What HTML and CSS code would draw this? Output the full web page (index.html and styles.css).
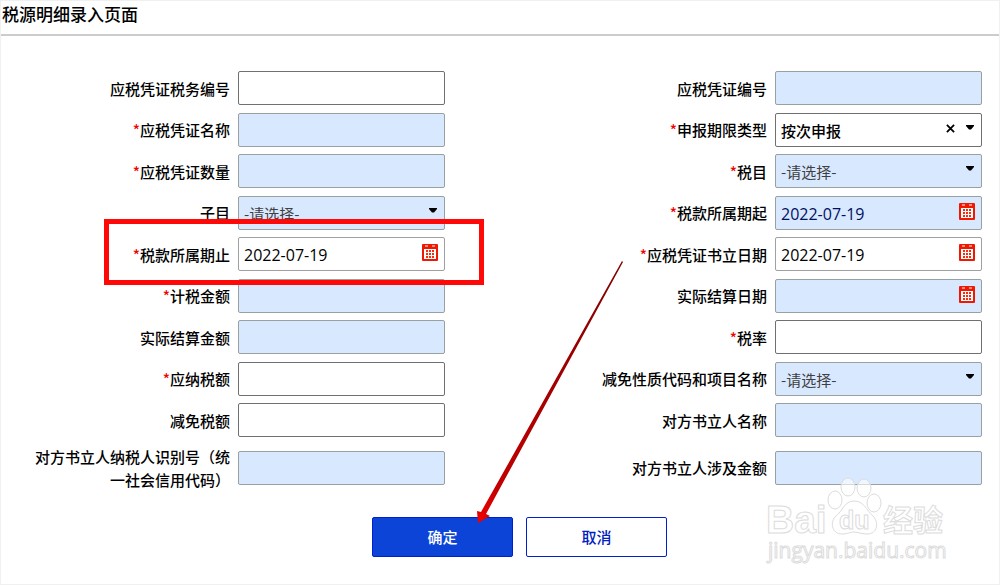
FILE: index.html
```html
<!DOCTYPE html>
<html lang="zh-CN">
<head>
  <meta charset="UTF-8">
  <meta name="viewport" content="width=device-width, initial-scale=1.0">
  <title>税源明细录入页面</title>
  <link rel="stylesheet" href="styles.css">
</head>
<body>
  <!-- Shared icons -->
  <svg class="sprite" aria-hidden="true">
    <symbol id="icon-calendar" viewBox="0 0 18 18">
      <path d="M2 0h14q1 0 1 1v15q0 1-1 1H2q-1 0-1-1V1q0-1 1-1z" fill="#f01800"/>
      <path d="M3 5h12v10H3z" fill="#fff"/>
      <path d="M4 2h3M11 2h3" stroke="#fff" stroke-width="1"/>
      <path d="M5 6h2v2H5zM8 6h2v2H8zM11 6h2v2h-2zM5 9h2v2H5zM8 9h2v2H8zM11 9h2v2h-2zM5 12h2v2H5zM8 12h2v2H8zM11 12h2v2h-2z" fill="#f03010"/>
    </symbol>
    <symbol id="icon-arrow" viewBox="0 0 8 5">
      <path d="M0 0h8v1L5 4.500H3L0 1z" fill="#000"/>
    </symbol>
  </svg>

  <div class="page">
    <header>
      <h1>税源明细录入页面</h1>
    </header>

    <form>
      <div class="columns">
        <!-- Left column -->
        <div class="column column-left">
          <div class="field">
            <label for="tax-no">应税凭证税务编号</label>
            <div class="control"><input type="text" id="tax-no"></div>
          </div>
          <div class="field">
            <label for="voucher-name"><i>*</i>应税凭证名称</label>
            <div class="control"><input type="text" id="voucher-name" class="filled"></div>
          </div>
          <div class="field">
            <label for="voucher-count"><i>*</i>应税凭证数量</label>
            <div class="control"><input type="text" id="voucher-count" class="filled"></div>
          </div>
          <div class="field">
            <label for="sub-item">子目</label>
            <div class="control">
              <select id="sub-item" class="filled"><option>-请选择-</option></select>
              <svg class="arrow"><use href="#icon-arrow"/></svg>
            </div>
          </div>
          <div class="field">
            <label for="period-end"><i>*</i>税款所属期止</label>
            <div class="control">
              <input type="text" id="period-end" class="date" value="2022-07-19">
              <svg class="calendar"><use href="#icon-calendar"/></svg>
            </div>
            <span class="highlight"></span>
          </div>
          <div class="field">
            <label for="tax-base"><i>*</i>计税金额</label>
            <div class="control"><input type="text" id="tax-base" class="filled"></div>
          </div>
          <div class="field">
            <label for="settle-amount">实际结算金额</label>
            <div class="control"><input type="text" id="settle-amount" class="filled"></div>
          </div>
          <div class="field">
            <label for="tax-due"><i>*</i>应纳税额</label>
            <div class="control"><input type="text" id="tax-due"></div>
          </div>
          <div class="field">
            <label for="tax-cut">减免税额</label>
            <div class="control"><input type="text" id="tax-cut"></div>
          </div>
          <div class="field field-tall">
            <label for="party-id">对方书立人纳税人识别号（统一社会信用代码）</label>
            <div class="control"><input type="text" id="party-id" class="filled"></div>
          </div>
        </div>

        <!-- Right column -->
        <div class="column">
          <div class="field">
            <label for="voucher-no">应税凭证编号</label>
            <div class="control"><input type="text" id="voucher-no" class="filled"></div>
          </div>
          <div class="field">
            <label for="period-type"><i>*</i>申报期限类型</label>
            <div class="control">
              <select id="period-type"><option>按次申报</option></select>
              <button type="button" class="clear" aria-label="清除">
                <svg viewBox="0 0 10 10"><path d="M1 1l8 8M9 1L1 9" stroke="#000" stroke-width="2"/></svg>
              </button>
              <svg class="arrow"><use href="#icon-arrow"/></svg>
            </div>
          </div>
          <div class="field">
            <label for="tax-item"><i>*</i>税目</label>
            <div class="control">
              <select id="tax-item" class="filled"><option>-请选择-</option></select>
              <svg class="arrow"><use href="#icon-arrow"/></svg>
            </div>
          </div>
          <div class="field">
            <label for="period-start"><i>*</i>税款所属期起</label>
            <div class="control">
              <input type="text" id="period-start" class="date filled" value="2022-07-19">
              <svg class="calendar"><use href="#icon-calendar"/></svg>
            </div>
          </div>
          <div class="field">
            <label for="sign-date"><i>*</i>应税凭证书立日期</label>
            <div class="control">
              <input type="text" id="sign-date" class="date" value="2022-07-19">
              <svg class="calendar"><use href="#icon-calendar"/></svg>
            </div>
          </div>
          <div class="field">
            <label for="settle-date">实际结算日期</label>
            <div class="control">
              <input type="text" id="settle-date" class="date filled">
              <svg class="calendar"><use href="#icon-calendar"/></svg>
            </div>
          </div>
          <div class="field">
            <label for="tax-rate"><i>*</i>税率</label>
            <div class="control"><input type="text" id="tax-rate"></div>
          </div>
          <div class="field">
            <label for="cut-code">减免性质代码和项目名称</label>
            <div class="control">
              <select id="cut-code" class="filled"><option>-请选择-</option></select>
              <svg class="arrow"><use href="#icon-arrow"/></svg>
            </div>
          </div>
          <div class="field">
            <label for="party-name">对方书立人名称</label>
            <div class="control"><input type="text" id="party-name" class="filled"></div>
          </div>
          <div class="field field-tall">
            <label for="party-amount">对方书立人涉及金额</label>
            <div class="control"><input type="text" id="party-amount" class="filled"></div>
          </div>
        </div>
      </div>

      <!-- Buttons -->
      <div class="actions">
        <button type="submit" class="btn btn-primary">确定</button>
        <button type="button" class="btn">取消</button>
        <svg class="pointer" viewBox="0 0 152 266" aria-hidden="true">
          <defs>
            <linearGradient id="pointer-fill" x1="1" y1="0" x2="0" y2="1">
              <stop offset="0" stop-color="#800000"/>
              <stop offset="0.850" stop-color="#c00000"/>
              <stop offset="1" stop-color="#f00000"/>
            </linearGradient>
          </defs>
          <path d="M149 2L150 3L13 255L17 257L5 264L4 252L8 253z" fill="url(#pointer-fill)"/>
        </svg>
      </div>
    </form>

    <!-- Watermark -->
    <svg class="watermark" viewBox="0 0 190 100" aria-hidden="true">
      <g fill="#fff" fill-opacity="0.600" stroke="#dcdcdc" stroke-width="1">
        <ellipse cx="75" cy="30" rx="7" ry="9"/>
        <ellipse cx="88" cy="17" rx="7" ry="9"/>
        <ellipse cx="104" cy="18" rx="7" ry="9"/>
        <ellipse cx="114" cy="33" rx="7" ry="9"/>
        <path d="M94 31C84 31 83 41 76 46C70 51 71 64 82 64C88 64 90 62 94 62C98 62 101 64 107 64C118 64 119 52 113 46C106 40 104 31 94 31z"/>
        <text class="wm-name" x="6" y="63">Bai</text>
        <text class="wm-du" x="79" y="59">du</text>
        <text class="wm-cn" x="123" y="61">经验</text>
        <text class="wm-url" x="8" y="88">jingyan.baidu.com</text>
      </g>
    </svg>
  </div>
</body>
</html>
```

FILE: styles.css
```css
/* General Styles */
* {
  box-sizing: border-box;
}

body {
  margin: 0;
  background-color: #fff;
  color: #000;
  font-family: "Noto Sans CJK SC", sans-serif;
  font-size: 15px;
  font-weight: 500;
}

.sprite {
  display: none;
}

.page {
  position: relative;
  min-height: 100vh;
  border: 1px solid #f0f0f0;
}

/* Header */
header {
  height: 35px;
  border-bottom: 2px solid #ccc;
}

h1 {
  margin: 0;
  padding-left: 1px;
  font-size: 17px;
  font-weight: 500;
  line-height: 26px;
}

/* Form columns */
form {
  padding: 35px 17px 27px;
}

.columns {
  display: grid;
  grid-template-columns: 1fr 1fr;
}

.column {
  display: flex;
  flex-direction: column;
  justify-content: space-between;
  min-height: 420px;
}

.column-left {
  padding-right: 55px;
}

.field {
  position: relative;
  display: flex;
  align-items: center;
  justify-content: flex-end;
  gap: 8px;
}

.field-tall {
  min-height: 46px;
}

label {
  max-width: 200px;
  line-height: 23px;
  text-align: right;
}

label i {
  color: #f00000;
  font-style: normal;
}

/* Controls */
.control {
  position: relative;
  flex: none;
  width: 207px;
}

.control input,
.control select {
  display: block;
  width: 100%;
  height: 34px;
  padding: 1px 5px 0;
  border: 1px solid #707070;
  border-radius: 2px;
  background: #fff;
  color: #000;
  font-family: inherit;
  font-size: 15px;
  font-weight: 500;
  appearance: none;
}

.control .date {
  padding-top: 2px;
  border-color: #a0a0a0;
  font-family: "Open Sans", "Noto Sans", sans-serif;
  font-size: 16px;
}

.control .filled {
  border-color: #98a0a0;
  background: #d8e8ff;
  color: #404040;
}

.control select.filled {
  font-weight: 400;
}

.control .date.filled {
  color: #001060;
}

.arrow {
  position: absolute;
  top: 12px;
  right: 8px;
  width: 8px;
  height: 5px;
  pointer-events: none;
}

.calendar {
  position: absolute;
  top: 7px;
  right: 6px;
  width: 18px;
  height: 18px;
}

.clear {
  position: absolute;
  top: 11px;
  right: 27px;
  width: 9px;
  height: 9px;
  padding: 0;
  border: none;
  background: none;
}

.clear svg {
  display: block;
}

/* Red frame round the period end date */
.highlight {
  position: absolute;
  top: -18px;
  right: -39px;
  bottom: -14px;
  z-index: 1;
  width: 380px;
  border: 5px solid #ff0808;
  pointer-events: none;
}

/* Buttons */
.actions {
  position: relative;
  display: flex;
  justify-content: center;
  gap: 13px;
  margin-top: 26px;
  padding-left: 39px;
}

.btn {
  width: 141px;
  height: 40px;
  padding: 0 0 2px;
  border: 1px solid #0020d0;
  border-radius: 2px;
  background: #fff;
  color: #0020c0;
  font-family: inherit;
  font-size: 15px;
  font-weight: 500;
}

.btn-primary {
  background: #0c44d8;
  color: #fff;
}

.pointer {
  position: absolute;
  bottom: 32px;
  left: 50%;
  width: 152px;
  height: 266px;
  margin-left: -27px;
  pointer-events: none;
}

/* Watermark */
.watermark {
  position: absolute;
  right: 49px;
  bottom: 14px;
  width: 190px;
  height: 100px;
  pointer-events: none;
}

.wm-name {
  font: bold 39px "Liberation Sans", sans-serif;
}

.wm-du {
  font: bold 25px "Liberation Sans", sans-serif;
}

.wm-cn {
  font: bold 30px "Noto Sans CJK SC", sans-serif;
}

.wm-url {
  font: 21px "Open Sans", sans-serif;
}
```
